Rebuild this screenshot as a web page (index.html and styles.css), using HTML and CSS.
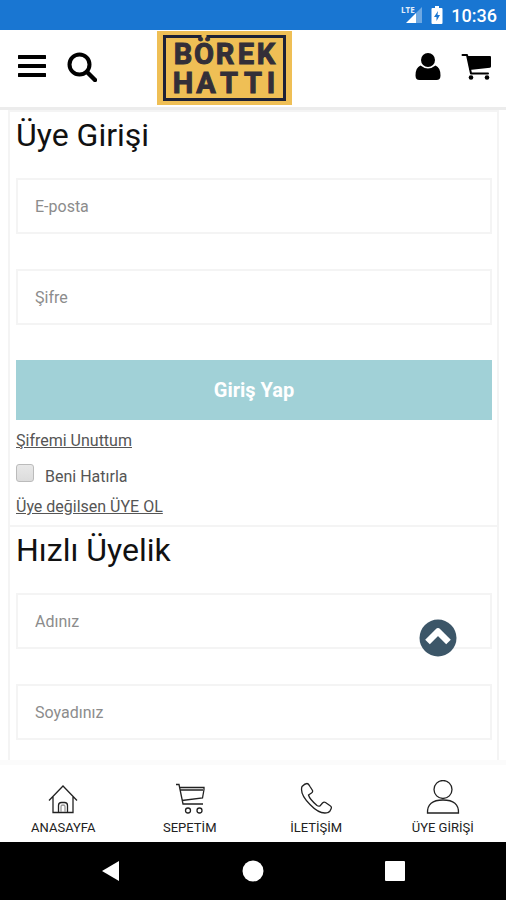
FILE: index.html
```
<!doctype html>
<html lang="tr">
<head>
<meta charset="utf-8" />
<meta name="viewport" content="width=device-width, initial-scale=1" />
<title>Börek Hattı – Üye Girişi</title>
<link rel="stylesheet" href="styles.css">
</head>
<body>
<div class="status">
  <svg width="22" height="20" viewBox="0 0 22 20" aria-hidden="true">
    <path d="M21 2V18H15V8z" fill="#6ea8e2" />
    <path d="M15 8V18H5z" fill="#fff" />
    <text class="lte" x="0" y="8">LTE</text>
  </svg>
  <svg width="12" height="20" viewBox="0 0 12 20" aria-hidden="true">
    <path d="M4 1h4v2h2.500q1 0 1 1v14q0 1-1 1h-9q-1 0-1-1V4q0-1 1-1H4z" fill="#fff" />
    <path d="M7 6 3 12h2.500v4L9 10H6.500z" fill="#1976d2" />
  </svg>
  <time>10:36</time>
</div>

<header class="header">
  <div class="side">
    <button class="icon-btn" aria-label="Menü">
      <svg width="28" height="30" viewBox="0 0 28 30">
        <path d="M1 5h26M1 14h26M1 23h26" stroke="#000" stroke-width="4" stroke-linecap="round" />
      </svg>
    </button>
    <button class="icon-btn" aria-label="Ara">
      <svg width="30" height="30" viewBox="0 0 30 30" fill="none" stroke="#000">
        <circle cx="12.500" cy="12.500" r="10" stroke-width="4" />
        <path d="m20 20 8 8" stroke-width="4.500" stroke-linecap="round" />
      </svg>
    </button>
  </div>
  <a class="logo" href="#" aria-label="Börek Hattı">
    <svg width="135" height="74" viewBox="0 0 135 74">
      <rect width="135" height="74" fill="#efbf55" />
      <path d="M43 5.500H7.500V68.500H127.500V5.500H51" fill="none" stroke="#1d2136" stroke-width="3" />
      <path d="M43 4v5M51 4v5" stroke="#1d2136" stroke-width="3" />
      <g class="logo-text">
        <text x="26 47 68 89 109" y="33">BÖREK</text>
        <text x="26 49 72 96 114" y="62">HATTI</text>
      </g>
    </svg>
  </a>
  <div class="side side-right">
    <a class="icon-btn" href="#" aria-label="Hesabım">
      <svg width="26" height="30" viewBox="0 0 26 30">
        <circle cx="13" cy="8" r="7" />
        <path d="M5.500 13.500q7.500 6 15 0 5 2 5 10 0 4.500-4 4.500h-17q-4 0-4-4.500 0-8 5-10z" />
      </svg>
    </a>
    <a class="icon-btn" href="#" aria-label="Sepet">
      <svg width="31" height="30" viewBox="0 0 31 30">
        <path d="M6.500 4H29q1 0 1 1v9.500q0 1-1 1.200L8.500 18z" />
        <path d="M1.500 3H6l4 18.500H27" fill="none" stroke="#000" stroke-width="2" stroke-linecap="round" stroke-linejoin="round" />
        <circle cx="10" cy="25.500" r="2.300" />
        <circle cx="26" cy="25.500" r="2.300" />
      </svg>
    </a>
  </div>
</header>

<main class="content">
  <form class="panel">
    <h1>Üye Girişi</h1>
    <input class="field" type="email" placeholder="E-posta" aria-label="E-posta">
    <input class="field" type="password" placeholder="Şifre" aria-label="Şifre">
    <button class="submit" type="submit">Giriş Yap</button>
    <a class="link" href="#">Şifremi Unuttum</a>
    <label class="remember"><input type="checkbox"> <span>Beni Hatırla</span></label>
    <a class="link" href="#">Üye değilsen ÜYE OL</a>
  </form>
  <form class="panel">
    <h1>Hızlı Üyelik</h1>
    <input class="field" type="text" placeholder="Adınız" aria-label="Adınız">
    <input class="field" type="text" placeholder="Soyadınız" aria-label="Soyadınız">
  </form>
  <button class="to-top" aria-label="Yukarı çık">
    <svg width="38" height="38" viewBox="0 0 38 38">
      <circle cx="19" cy="19" r="18.500" fill="#3c5668" />
      <path d="M8.500 23 19 12.500 29.500 23" fill="none" stroke="#fff" stroke-width="6.500" stroke-linejoin="round" />
    </svg>
  </button>
</main>

<nav class="tabs">
  <a href="#">
    <svg width="34" height="34" viewBox="0 0 34 34">
      <path d="M3 18.500 17 4l14 14.500M7 14.500V30.500H27V14.500M12.500 30V23.500q0-3 3-3h3q3 0 3 3V30" />
      <path d="M15 30v-5.500q0-1.500 2-1.500t2 1.500V30" stroke="#999" />
    </svg>
    ANASAYFA
  </a>
  <a href="#">
    <svg width="34" height="34" viewBox="0 0 34 34">
      <path d="M3 2.500h3l4 19.500H30M7 5.500H31v2L29.500 16 9 18.500M7.500 8H30" />
      <circle cx="15" cy="28.500" r="2.500" /><circle cx="26.500" cy="28.500" r="2.500" />
    </svg>
    SEPETİM
  </a>
  <a href="#">
    <svg width="34" height="34" viewBox="0 0 34 34">
      <path d="M3 4.500q3-3 5-3 1.500 0 3 3l2.500 4q.500 1.500-1 2.500l-3 2q1 4 8.500 10.500 1.500 1 3 .5l2.500-3q1.500-1.500 3-.5l5 3.500q1.500 1 .5 3-1 3-3 3.500-8 2.500-18-8Q.500 12 3 4.500z" />
    </svg>
    İLETİŞİM
  </a>
  <a href="#">
    <svg width="34" height="36" viewBox="0 0 34 36">
      <circle cx="17" cy="9.500" r="9" />
      <path d="M1.500 33q-.5-13 15.500-13t15.500 13z" />
    </svg>
    ÜYE GİRİŞİ
  </a>
</nav>

<div class="sysbar">
  <button aria-label="Geri"><svg width="22" height="22" viewBox="0 0 22 22"><path d="M2 11 19 1V21z" /></svg></button>
  <button aria-label="Ana ekran"><svg width="22" height="22" viewBox="0 0 22 22"><circle cx="11" cy="11" r="10.500" /></svg></button>
  <button aria-label="Son uygulamalar"><svg width="22" height="22" viewBox="0 0 22 22"><rect x="1" y="1" width="20" height="20" rx="1" /></svg></button>
</div>
</body>
</html>
```

FILE: styles.css
```
:root{
  --blue:#1976d2;
  --teal:#a1d1d7;
  --line:#f4f4f4;
  --text:#555;
}
*{box-sizing:border-box;margin:0;padding:0}
body{
  display:flex;flex-direction:column;
  height:100vh;
  background:#fff;color:var(--text);
  font-family:Roboto,"Liberation Sans",sans-serif;font-size:16px;
}
button{border:0;background:none;font-family:inherit;cursor:pointer}
a{color:inherit}
svg{display:block}

.status{
  display:flex;align-items:center;justify-content:flex-end;gap:8px;
  height:30px;padding:0 9px;
  background:var(--blue);color:#fff;
  font-size:18px;font-weight:500;
}
.lte{font-family:"Open Sans",sans-serif;font-size:8px;font-weight:700;fill:#e3eefa}

.header{
  display:flex;align-items:center;
  height:80px;padding:0 14px 1px 18px;
  border-bottom:3px solid #ececec;
}
.side{display:flex;align-items:center;gap:21px;width:139px;padding-bottom:3px}
.side-right{flex:1;justify-content:flex-end;gap:20px}
.logo-text{
  font-size:29px;font-weight:700;text-anchor:middle;
  fill:#332f38;stroke:#332f38;stroke-width:1px;
}

.content{position:relative;flex:1;min-height:0;overflow:hidden;padding:0 7px 0 8px}
.panel{
  display:flex;flex-direction:column;align-items:flex-start;
  padding:2px 5px 5px 6px;
  border:2px solid var(--line);
}
.panel + .panel{border-top:0}
h1{color:#111;font-size:32px;font-weight:400;line-height:42px;margin-bottom:22px}
.field{
  width:100%;height:56px;margin-bottom:35px;padding:0 17px;
  border:2px solid var(--line);background:#fff;
  font-family:inherit;font-size:16px;color:var(--text);
}
.field::placeholder{color:#8c8c8c}
.submit{
  width:100%;height:60px;margin-bottom:8px;
  background:var(--teal);color:#fff;
  font-size:20px;font-weight:700;
}
.link{line-height:26px}
.remember{display:flex;gap:11px;height:32px;margin:4px 0;line-height:38px}
.remember input{
  appearance:none;
  width:18px;height:18px;margin-top:6px;
  border:1px solid #bbb;border-radius:3px;
  background:linear-gradient(#e8e8e8,#dcdcdc);
}
.to-top{position:absolute;right:49px;bottom:103px}

.tabs{
  display:grid;grid-template-columns:repeat(4,1fr);align-items:end;
  height:82px;padding-bottom:6px;
  border-top:5px solid #fbfbfb;
}
.tabs a{
  display:flex;flex-direction:column;align-items:center;gap:4px;
  color:#222;font-size:13px;line-height:16px;text-decoration:none;
}
.tabs svg{fill:none;stroke:#222;stroke-width:1.3}

.sysbar{
  display:flex;align-items:center;justify-content:center;gap:120px;
  height:58px;
  background:#000;
}
.sysbar svg{fill:#fff}
```
